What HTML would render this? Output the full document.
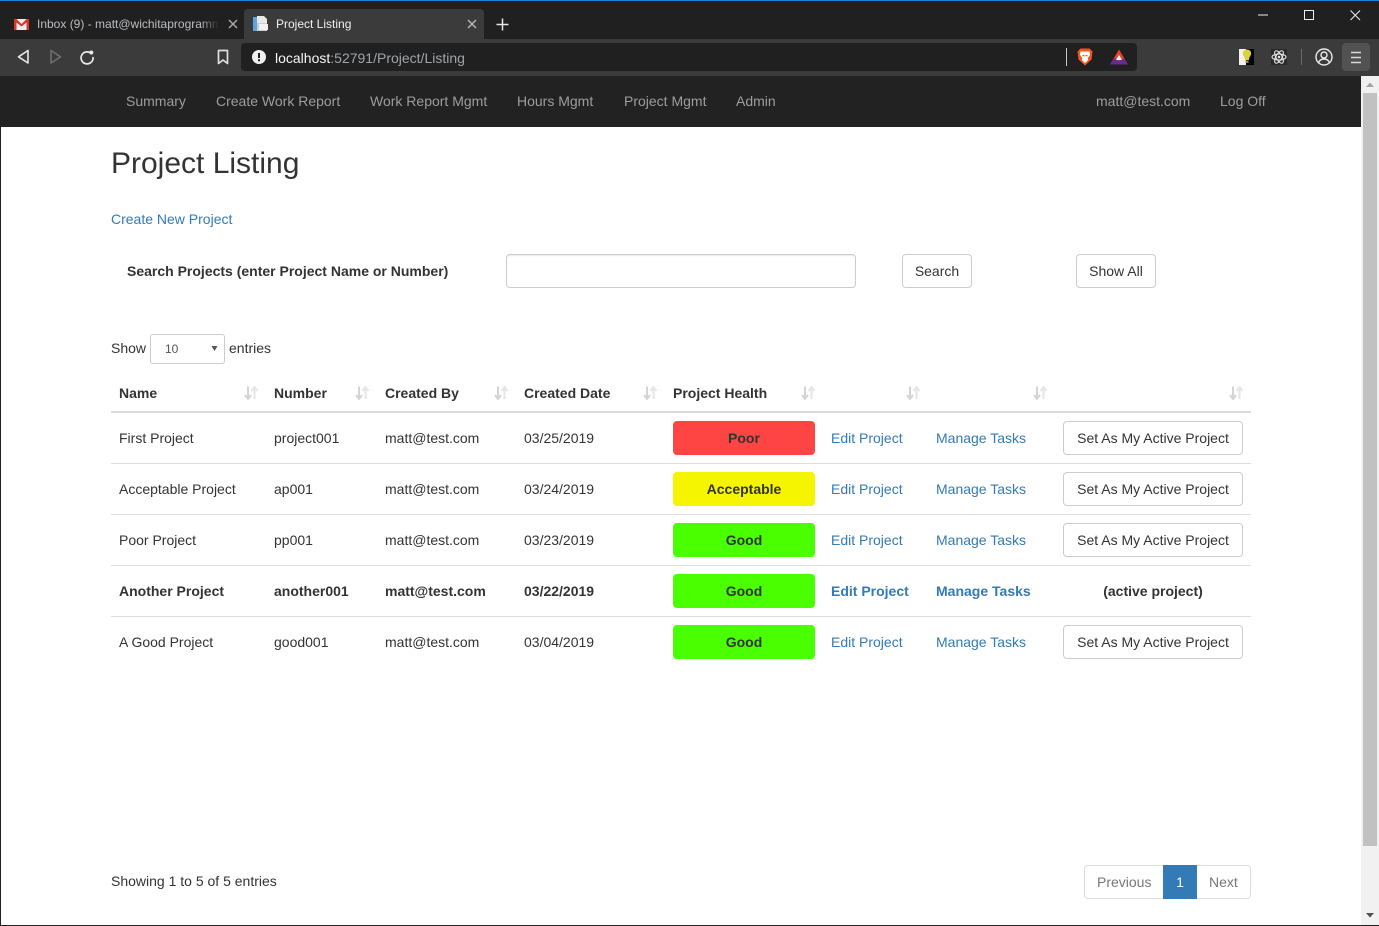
<!DOCTYPE html>
<html><head><meta charset="utf-8"><title>Project Listing</title>
<style>
*{box-sizing:border-box}
html,body{margin:0;padding:0;width:1379px;height:926px;overflow:hidden;background:#fff;font-family:"Liberation Sans",sans-serif;font-size:14px;color:#333}
.a{position:absolute;white-space:nowrap}
.t{position:absolute;white-space:nowrap;line-height:20px}
a{color:#337ab7;text-decoration:none}
.nav{color:#9d9d9d;top:91px}
.th{font-weight:bold;top:383px}
.btn{position:absolute;height:34px;line-height:32px;border:1px solid #ccc;border-radius:4px;background:#fff;text-align:center;color:#333}
.hl{position:absolute;left:673px;width:142px;height:34px;line-height:34px;border-radius:4px;text-align:center;font-weight:bold;color:#333}
.rule{position:absolute;left:111px;width:1140px;height:1px;background:#ddd}
.b{font-weight:bold}
.sort{position:absolute;top:386px;width:14px;height:14px}
</style></head><body>
<!-- browser chrome -->
<div class="a" style="left:0;top:0;width:1379px;height:39px;background:#202020"></div>
<div class="a" style="left:0;top:0;width:1379px;height:1px;background:#1e7fe0"></div>
<div class="a" style="left:244px;top:9px;width:240px;height:30px;background:#3b3b3b;border-radius:4px 4px 0 0"></div>
<svg class="a" style="left:14px;top:19px" width="15" height="11" viewBox="0 0 15 11"><rect width="15" height="11" fill="#eee"/><path d="M0 0h2.500L7.500 5 12.500 0H15V11H12.500V3.500L7.500 7.500 2.500 3.500V11H0Z" fill="#d9352b"/></svg>
<div class="t" style="left:37px;top:14px;font-size:12px;color:#b9bdc1;width:182px;overflow:hidden;-webkit-mask-image:linear-gradient(90deg,#000 90%,transparent)">Inbox (9) - matt@wichitaprogrammer</div>
<svg class="a" style="left:228px;top:19px" width="10" height="10" viewBox="0 0 10 10"><path d="M1 1L9 9M9 1L1 9" stroke="#a8a8a8" stroke-width="1.500"/></svg>
<svg class="a" style="left:252px;top:15px" width="17" height="17" viewBox="0 0 17 17"><path d="M1 2h4v14H1z" fill="#5aa7e0"/><path d="M5 1h7l3 3v4H5z" fill="#e8e8e8"/><path d="M5 8h10v8H5z" fill="#c9ced3"/><path d="M7 9h9v6H7z" fill="#f2f2f2"/></svg>
<div class="t" style="left:276px;top:14px;font-size:12px;color:#f1f1f1">Project Listing</div>
<svg class="a" style="left:467px;top:19px" width="10" height="10" viewBox="0 0 10 10"><path d="M1 1L9 9M9 1L1 9" stroke="#b5b5b5" stroke-width="1.500"/></svg>
<svg class="a" style="left:496px;top:18px" width="13" height="13" viewBox="0 0 13 13"><path d="M6.500 0.500V12.500M0.500 6.500H12.500" stroke="#e6e6e6" stroke-width="1.500"/></svg>
<svg class="a" style="left:1258px;top:8px" width="110" height="16" viewBox="0 0 110 16"><path d="M0 7H10" stroke="#eee" stroke-width="1"/><rect x="46.500" y="2.500" width="9" height="9" fill="none" stroke="#eee" stroke-width="1"/><path d="M92.500 2.500L102 12M102 2.500L92.500 12" stroke="#eee" stroke-width="1"/></svg>

<div class="a" style="left:0;top:39px;width:1379px;height:37px;background:#3b3b3b"></div>
<svg class="a" style="left:16px;top:48px" width="16" height="18" viewBox="0 0 16 18"><path d="M12 2.500V15L2.500 8.800Z" fill="none" stroke="#e8e8e8" stroke-width="1.600" stroke-linejoin="round"/></svg>
<svg class="a" style="left:48px;top:48px" width="16" height="18" viewBox="0 0 16 18"><path d="M3 2.500V15L12.500 8.800Z" fill="none" stroke="#6e6e6e" stroke-width="1.600" stroke-linejoin="round"/></svg>
<svg class="a" style="left:79px;top:49px" width="16" height="16" viewBox="0 0 16 16"><path d="M12.800 5.200A6 6 0 1 0 14 8" fill="none" stroke="#e8e8e8" stroke-width="1.700"/><circle cx="12.300" cy="3.500" r="2" fill="#e8e8e8"/></svg>
<svg class="a" style="left:217px;top:49px" width="12" height="16" viewBox="0 0 12 16"><path d="M1.500 1.500H10.500V14.500L6 11 1.500 14.500Z" fill="none" stroke="#e0e0e0" stroke-width="1.700" stroke-linejoin="round"/></svg>
<div class="a" style="left:241px;top:43px;width:896px;height:28px;background:#202020;border-radius:4px"></div>
<svg class="a" style="left:252px;top:50px" width="14" height="14" viewBox="0 0 14 14"><circle cx="7" cy="7" r="7" fill="#f0f0f0"/><path d="M6 3h2v5H6zM6 9.300h2v2H6z" fill="#202020"/></svg>
<div class="t" style="left:275px;top:48px;font-size:14px;color:#f5f5f5">localhost<span style="color:#a0a4a8">:52791/Project/Listing</span></div>
<div class="a" style="left:1066px;top:48px;width:1px;height:18px;background:#c8c8c8"></div>
<svg class="a" style="left:1077px;top:48px" width="16" height="18" viewBox="0 0 16 18"><path d="M3.500 0.500H12.500L15.500 3.500 14.500 11.500 8 17.500 1.500 11.500 0.500 3.500Z" fill="#f1561f"/><path d="M3.500 3.500H12.500L13 7 10.800 10 11.200 12 8 15 4.800 12 5.200 10 3 7Z" fill="#fff"/><path d="M5.500 7h2v1.300h-2zM8.500 7h2v1.300h-2z" fill="#f1561f"/></svg>
<svg class="a" style="left:1110px;top:49px" width="18" height="16" viewBox="0 0 18 16"><path d="M9 0.500L18 15.500H0Z" fill="#e6432a"/><path d="M0 15.500L3.800 9 9 12 14.200 9 18 15.500Z" fill="#662d91"/><path d="M9 6L12 11H6Z" fill="#fff"/></svg>
<div class="a" style="left:1239px;top:49px;width:7px;height:16px;background:#f2f2f2"></div>
<div class="a" style="left:1246px;top:49px;width:8px;height:16px;background:#000"></div>
<svg class="a" style="left:1241px;top:49px" width="12" height="15" viewBox="0 0 12 15"><path d="M6 0.500C9 0.500 10.500 2.800 10 5.200 9.600 7.200 8 8 8 11H4C4 8 2.400 7.200 2 5.200 1.500 2.800 3 0.500 6 0.500Z" fill="#dcd23c"/><rect x="4.500" y="11.500" width="3" height="2.500" fill="#8e8e5a"/></svg>
<div class="a" style="left:1271px;top:49px;width:16px;height:16px;background:#2a2a2a"></div>
<svg class="a" style="left:1271px;top:49px" width="16" height="16" viewBox="0 0 16 16"><g fill="none" stroke="#e4e4e4" stroke-width="1.100"><ellipse cx="8" cy="8" rx="7" ry="3"/><ellipse cx="8" cy="8" rx="7" ry="3" transform="rotate(60 8 8)"/><ellipse cx="8" cy="8" rx="7" ry="3" transform="rotate(120 8 8)"/></g><circle cx="8" cy="8" r="1.300" fill="#e4e4e4"/></svg>
<div class="a" style="left:1301px;top:49px;width:1px;height:16px;background:#6b6b6b"></div>
<svg class="a" style="left:1315px;top:48px" width="18" height="18" viewBox="0 0 18 18"><g fill="none" stroke="#e8e8e8" stroke-width="1.400"><circle cx="9" cy="9" r="8"/><circle cx="9" cy="7" r="3"/><path d="M3.500 14.800C4.500 12 6.500 11 9 11S13.500 12 14.500 14.800"/></g></svg>
<div class="a" style="left:1342px;top:43px;width:28px;height:28px;background:#525252;border-radius:4px"></div>
<svg class="a" style="left:1351px;top:51px" width="10" height="13" viewBox="0 0 10 13"><path d="M0 1.500H10M0 6.500H10M0 11.500H10" stroke="#d8d8d8" stroke-width="1.500"/></svg>

<!-- navbar -->
<div class="a" style="left:0;top:76px;width:1361px;height:51px;background:#222"></div>
<div class="t nav" style="left:126px">Summary</div>
<div class="t nav" style="left:216px">Create Work Report</div>
<div class="t nav" style="left:370px">Work Report Mgmt</div>
<div class="t nav" style="left:517px">Hours Mgmt</div>
<div class="t nav" style="left:624px">Project Mgmt</div>
<div class="t nav" style="left:736px">Admin</div>
<div class="t nav" style="left:1096px">matt@test.com</div>
<div class="t nav" style="left:1220px">Log Off</div>

<!-- scrollbar -->
<div class="a" style="left:1361px;top:76px;width:18px;height:849px;background:#f1f1f1"></div>
<div class="a" style="left:1363px;top:93px;width:14px;height:753px;background:#c1c1c1"></div>
<svg class="a" style="left:1365px;top:81px" width="10" height="8" viewBox="0 0 10 8"><path d="M5 1.500L9 6H1Z" fill="#a3a3a3"/></svg>
<svg class="a" style="left:1365px;top:911px" width="10" height="8" viewBox="0 0 10 8"><path d="M5 6.500L9 2H1Z" fill="#505050"/></svg>
<div class="a" style="left:0;top:127px;width:1px;height:799px;background:#222"></div>
<div class="a" style="left:0;top:925px;width:1379px;height:1px;background:#222"></div>

<!-- content -->
<div class="a" style="left:111px;top:146px;font-size:30px;line-height:36px;color:#333">Project Listing</div>
<a class="t" href="#" style="left:111px;top:209px">Create New Project</a>
<div class="t b" style="left:127px;top:261px">Search Projects (enter Project Name or Number)</div>
<div class="a" style="left:506px;top:254px;width:350px;height:34px;border:1px solid #ccc;border-radius:4px;background:#fff;box-shadow:inset 0 1px 1px rgba(0,0,0,.075)"></div>
<div class="btn" style="left:902px;top:254px;width:70px">Search</div>
<div class="btn" style="left:1076px;top:254px;width:80px">Show All</div>

<div class="t" style="left:111px;top:338px">Show</div>
<div class="a" style="left:150px;top:334px;width:75px;height:30px;border:1px solid #ccc;border-radius:3px;background:#fff"></div>
<div class="t" style="left:165px;top:339px;font-size:12px;color:#555">10</div>
<svg class="a" style="left:211px;top:345px" width="7" height="7" viewBox="0 0 7 7"><path d="M0.500 1H6.500L3.500 6Z" fill="#555"/></svg>
<div class="t" style="left:229px;top:338px">entries</div>

<div class="t th" style="left:119px">Name</div>
<div class="t th" style="left:274px">Number</div>
<div class="t th" style="left:385px">Created By</div>
<div class="t th" style="left:524px">Created Date</div>
<div class="t th" style="left:673px">Project Health</div>
<svg width="0" height="0" style="position:absolute"><defs><symbol id="s" viewBox="0 0 14 14"><path d="M4 0.500V12M1 9L4 13 7 9" fill="none" stroke="#d4d4d4" stroke-width="2"/><path d="M10.500 13V2M7.500 5L10.500 1 13.500 5" fill="none" stroke="#e6e6e6" stroke-width="2"/></symbol></defs></svg>
<svg class="sort" style="left:244px"><use href="#s"/></svg>
<svg class="sort" style="left:355px"><use href="#s"/></svg>
<svg class="sort" style="left:494px"><use href="#s"/></svg>
<svg class="sort" style="left:643px"><use href="#s"/></svg>
<svg class="sort" style="left:801px"><use href="#s"/></svg>
<svg class="sort" style="left:906px"><use href="#s"/></svg>
<svg class="sort" style="left:1033px"><use href="#s"/></svg>
<svg class="sort" style="left:1229px"><use href="#s"/></svg>
<div class="rule" style="top:411px;height:2px"></div>

<!-- row 1 -->
<div class="t" style="left:119px;top:428px">First Project</div>
<div class="t" style="left:274px;top:428px">project001</div>
<div class="t" style="left:385px;top:428px">matt@test.com</div>
<div class="t" style="left:524px;top:428px">03/25/2019</div>
<div class="hl" style="top:421px;background:#ff4444">Poor</div>
<a class="t" href="#" style="left:831px;top:428px">Edit Project</a>
<a class="t" href="#" style="left:936px;top:428px">Manage Tasks</a>
<div class="btn" style="left:1063px;top:421px;width:180px">Set As My Active Project</div>
<div class="rule" style="top:463px"></div>
<!-- row 2 -->
<div class="t" style="left:119px;top:479px">Acceptable Project</div>
<div class="t" style="left:274px;top:479px">ap001</div>
<div class="t" style="left:385px;top:479px">matt@test.com</div>
<div class="t" style="left:524px;top:479px">03/24/2019</div>
<div class="hl" style="top:472px;background:#f5f500">Acceptable</div>
<a class="t" href="#" style="left:831px;top:479px">Edit Project</a>
<a class="t" href="#" style="left:936px;top:479px">Manage Tasks</a>
<div class="btn" style="left:1063px;top:472px;width:180px">Set As My Active Project</div>
<div class="rule" style="top:514px"></div>
<!-- row 3 -->
<div class="t" style="left:119px;top:530px">Poor Project</div>
<div class="t" style="left:274px;top:530px">pp001</div>
<div class="t" style="left:385px;top:530px">matt@test.com</div>
<div class="t" style="left:524px;top:530px">03/23/2019</div>
<div class="hl" style="top:523px;background:#49ff00">Good</div>
<a class="t" href="#" style="left:831px;top:530px">Edit Project</a>
<a class="t" href="#" style="left:936px;top:530px">Manage Tasks</a>
<div class="btn" style="left:1063px;top:523px;width:180px">Set As My Active Project</div>
<div class="rule" style="top:565px"></div>
<!-- row 4 -->
<div class="t b" style="left:119px;top:581px">Another Project</div>
<div class="t b" style="left:274px;top:581px">another001</div>
<div class="t b" style="left:385px;top:581px">matt@test.com</div>
<div class="t b" style="left:524px;top:581px">03/22/2019</div>
<div class="hl" style="top:574px;background:#49ff00">Good</div>
<a class="t b" href="#" style="left:831px;top:581px">Edit Project</a>
<a class="t b" href="#" style="left:936px;top:581px">Manage Tasks</a>
<div class="t b" style="left:1063px;top:581px;width:180px;text-align:center">(active project)</div>
<div class="rule" style="top:616px"></div>
<!-- row 5 -->
<div class="t" style="left:119px;top:632px">A Good Project</div>
<div class="t" style="left:274px;top:632px">good001</div>
<div class="t" style="left:385px;top:632px">matt@test.com</div>
<div class="t" style="left:524px;top:632px">03/04/2019</div>
<div class="hl" style="top:625px;background:#49ff00">Good</div>
<a class="t" href="#" style="left:831px;top:632px">Edit Project</a>
<a class="t" href="#" style="left:936px;top:632px">Manage Tasks</a>
<div class="btn" style="left:1063px;top:625px;width:180px">Set As My Active Project</div>

<!-- footer -->
<div class="t" style="left:111px;top:871px">Showing 1 to 5 of 5 entries</div>
<div class="a" style="left:1084px;top:865px;width:167px;height:34px;border:1px solid #ddd;border-radius:4px;background:#fff"></div>
<div class="t" style="left:1097px;top:872px;color:#777">Previous</div>
<div class="a" style="left:1163px;top:865px;width:34px;height:34px;line-height:34px;background:#337ab7;color:#fff;text-align:center">1</div>
<div class="t" style="left:1209px;top:872px;color:#777">Next</div>
</body></html>
